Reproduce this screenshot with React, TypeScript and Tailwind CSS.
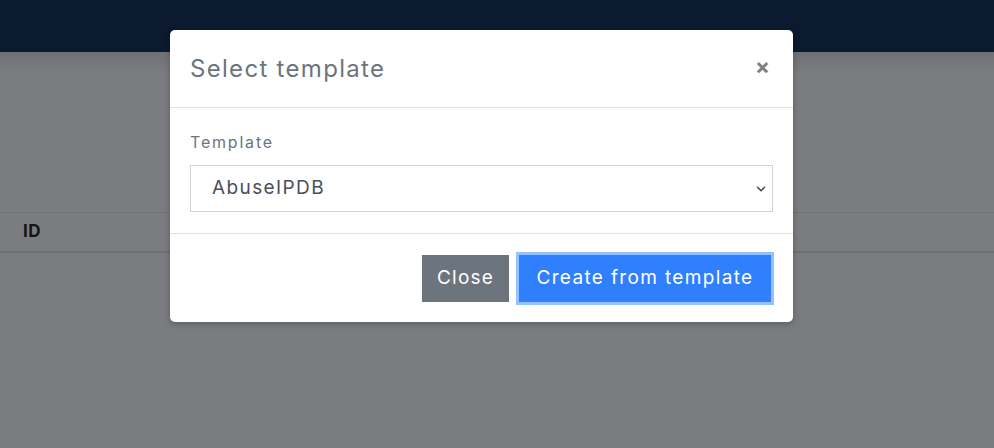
import { ChevronDown } from "lucide-react";

const font = { fontFamily: "Inter, 'Open Sans', sans-serif" };

export default function App() {
  return (
    <div className="relative h-[448px] w-[994px] overflow-hidden bg-[#7b7c7f]" style={font}>
      {/* navbar */}
      <div className="h-[52px] bg-[#0b1a2e]" />
      <div className="h-[20px] bg-gradient-to-b from-[#6f7072] to-[#7b7c7f]" />

      {/* page behind backdrop */}
      <div className="pt-[140px]">
        <div className="flex h-[41px] items-center border-t border-[#727375] border-b-[2px] border-b-[#6e6f71] px-[23px]">
          <span className="text-[17px] font-bold tracking-[0.5px] text-[#141414]">ID</span>
        </div>
      </div>

      {/* modal */}
      <div className="absolute left-[170px] top-[30px] w-[623px] rounded-[5px] bg-white shadow-[0_2px_6px_rgba(0,0,0,0.25)]">
        <div className="flex h-[78px] items-center justify-between border-b border-[#dee2e6] px-[20px]">
          <h2 className="text-[24px] font-normal tracking-[1.3px] text-[#6c757d]">Select template</h2>
          <button className="mr-[3px] mb-[6px] text-[22px] font-bold leading-none text-[#808080]">×</button>
        </div>

        <div className="flex h-[126px] flex-col border-b border-[#dee2e6] px-[20px] pt-[23px]">
          <label className="text-[16px] leading-[22px] tracking-[1.8px] text-[#6c757d]">Template</label>
          <div className="mt-[12px] flex h-[47px] items-center justify-between border border-[#ced4da] pl-[21px] pr-[4px]">
            <span className="text-[19px] tracking-[1.4px] text-[#495057]">AbuseIPDB</span>
            <ChevronDown size={14} strokeWidth={2.5} className="text-[#444]" />
          </div>
        </div>

        <div className="flex h-[88px] items-center justify-end gap-[10px] pr-[22px]">
          <button className="flex h-[47px] w-[87px] items-center justify-center bg-[#6c757d] text-[19px] tracking-[1.2px] text-white">
            Close
          </button>
          <button className="flex h-[47px] w-[252px] items-center justify-center bg-[#2f7ffe] text-[19px] tracking-[1.35px] text-white ring-[3px] ring-[#93c2fd]">
            Create from template
          </button>
        </div>
      </div>
    </div>
  );
}
